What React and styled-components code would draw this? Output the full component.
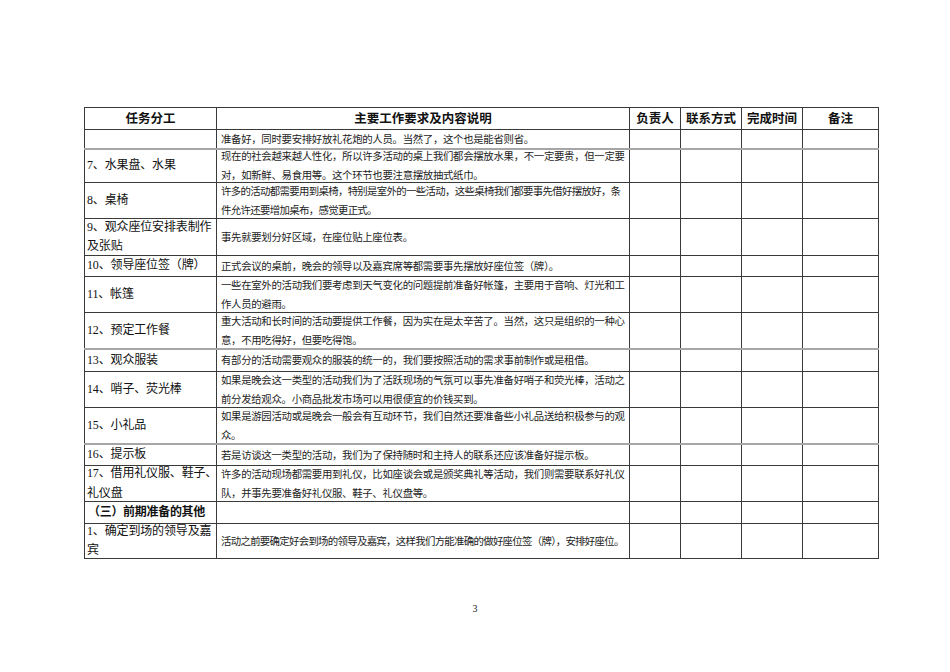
import React from "react"
import styled, { createGlobalStyle } from "styled-components"

const GlobalStyle = createGlobalStyle`
  html, body {
    margin: 0;
    padding: 0;
    background: #ffffff;
  }
  body {
    font-family: "Liberation Serif", "Noto Sans CJK SC", serif;
    color: #111;
  }
`

const Page = styled.div`
  width: 950px;
  height: 672px;
  padding-top: 107px;
  box-sizing: border-box;
`

const Table = styled.table`
  margin-left: 84px;
  width: 794px;
  border-collapse: collapse;
  table-layout: fixed;
`

const HeadCell = styled.th`
  height: 21px;
  padding: 0;
  border: 1px solid #3a3a3a;
  font-family: "Liberation Sans", "Noto Sans CJK SC", sans-serif;
  font-size: 12.5px;
  font-weight: 700;
  line-height: 20px;
  text-align: center;
  vertical-align: middle;
  color: #111;
  overflow: hidden;
`

const Row = styled.tr`
  & > td {
    height: ${props => props.$h - (props.$split ? 2 : 1)}px;
    border-top: ${props =>
      props.$split ? "2px solid #a6a6a6" : "1px solid #3a3a3a"};
  }
`

const TaskCell = styled.td`
  padding: 0 0 0 ${props => (props.$bold ? 3 : 2)}px;
  border: 1px solid #3a3a3a;
  font-family: ${props =>
    props.$bold
      ? `"Liberation Sans", "Noto Sans CJK SC", sans-serif`
      : `"Liberation Serif", "Noto Sans CJK SC", serif`};
  font-size: 12px;
  font-weight: ${props => (props.$bold ? 700 : 400)};
  letter-spacing: ${props => (props.$bold ? "-0.3px" : "-0.15px")};
  vertical-align: middle;
  white-space: nowrap;
  overflow: hidden;
  color: #111;
`

const DescCell = styled.td`
  padding: 0 0 0 4px;
  border: 1px solid #3a3a3a;
  font-size: 10.4px;
  vertical-align: middle;
  white-space: nowrap;
  overflow: hidden;
  color: #1c1c1c;
  letter-spacing: ${props => props.$spacing}px;
`

const EmptyCell = styled.td`
  padding: 0;
  border: 1px solid #3a3a3a;
`

/* negative margin so the line pitch does not push the row taller */
const Text = styled.div`
  margin: -5px 0;
`

const Line = styled.div`
  height: ${props => props.$lh}px;
  line-height: ${props => props.$lh}px;
`

const PageNumber = styled.div`
  margin-top: 44px;
  text-align: center;
  font-family: "Liberation Serif", serif;
  font-size: 10px;
  color: #222;
`

const rows = [
  { task: [""], desc: ["准备好，同时要安排好放礼花炮的人员。当然了，这个也是能省则省。"], h: 19 },
  {
    task: ["7、水果盘、水果"],
    desc: [
      "现在的社会越来越人性化，所以许多活动的桌上我们都会摆放水果，不一定要贵，但一定要",
      "对，如新鲜、易食用等。这个环节也要注意摆放抽式纸巾。",
    ],
    h: 34,
    split: true,
  },
  {
    task: ["8、桌椅"],
    desc: [
      "许多的活动都需要用到桌椅，特别是室外的一些活动，这些桌椅我们都要事先借好摆放好，条",
      "件允许还要增加桌布，感觉更正式。",
    ],
    h: 36,
    spacing: -0.65,
  },
  {
    task: ["9、观众座位安排表制作", "及张贴"],
    desc: ["事先就要划分好区域，在座位贴上座位表。"],
    h: 37,
  },
  {
    task: ["10、领导座位签（牌）"],
    desc: ["正式会议的桌前，晚会的领导以及嘉宾席等都需要事先摆放好座位签（牌）。"],
    h: 21,
  },
  {
    task: ["11、帐篷"],
    desc: [
      "一些在室外的活动我们要考虑到天气变化的问题提前准备好帐篷，主要用于音响、灯光和工",
      "作人员的避雨。",
    ],
    h: 36,
  },
  {
    task: ["12、预定工作餐"],
    desc: [
      "重大活动和长时间的活动要提供工作餐，因为实在是太辛苦了。当然，这只是组织的一种心",
      "意，不用吃得好，但要吃得饱。",
    ],
    h: 36,
  },
  {
    task: ["13、观众服装"],
    desc: ["有部分的活动需要观众的服装的统一的，我们要按照活动的需求事前制作或是租借。"],
    h: 23,
    split: true,
  },
  {
    task: ["14、哨子、荧光棒"],
    desc: [
      "如果是晚会这一类型的活动我们为了活跃现场的气氛可以事先准备好哨子和荧光棒，活动之",
      "前分发给观众。小商品批发市场可以用很便宜的价钱买到。",
    ],
    h: 36,
  },
  {
    task: ["15、小礼品"],
    desc: [
      "如果是游园活动或是晚会一般会有互动环节，我们自然还要准备些小礼品送给积极参与的观",
      "众。",
    ],
    h: 36,
  },
  {
    task: ["16、提示板"],
    desc: ["若是访谈这一类型的活动，我们为了保持随时和主持人的联系还应该准备好提示板。"],
    h: 22,
    split: true,
  },
  {
    task: ["17、借用礼仪服、鞋子、", "礼仪盘"],
    desc: [
      "许多的活动现场都需要用到礼仪，比如座谈会或是颁奖典礼等活动，我们则需要联系好礼仪",
      "队，并事先要准备好礼仪服、鞋子、礼仪盘等。",
    ],
    h: 36,
  },
  { task: ["（三）前期准备的其他"], desc: [], h: 22, bold: true },
  {
    task: ["1、确定到场的领导及嘉", "宾"],
    desc: ["活动之前要确定好会到场的领导及嘉宾，这样我们方能准确的做好座位签（牌），安排好座位。"],
    h: 35,
    spacing: -0.68,
  },
]

const widths = [132, 413, 51, 61, 61, 76]
const headers = ["任务分工", "主要工作要求及内容说明", "负责人", "联系方式", "完成时间", "备注"]

export default function App() {
  return (
    <Page>
      <GlobalStyle />
      <Table>
        <colgroup>
          {widths.map((w, i) => (
            <col key={i} style={{ width: w }} />
          ))}
        </colgroup>
        <thead>
          <tr>
            {headers.map(h => (
              <HeadCell key={h}>{h}</HeadCell>
            ))}
          </tr>
        </thead>
        <tbody>
          {rows.map((r, i) => (
            <Row key={i} $h={r.h} $split={r.split}>
              <TaskCell $bold={r.bold}>
                <Text>
                  {r.task.map((t, j) => (
                    <Line key={j} $lh={19.5}>
                      {t}
                    </Line>
                  ))}
                </Text>
              </TaskCell>
              <DescCell $spacing={r.spacing ?? -0.3}>
                <Text>
                  {r.desc.map((d, j) => (
                    <Line key={j} $lh={19}>
                      {d}
                    </Line>
                  ))}
                </Text>
              </DescCell>
              <EmptyCell />
              <EmptyCell />
              <EmptyCell />
              <EmptyCell />
            </Row>
          ))}
        </tbody>
      </Table>
      <PageNumber>3</PageNumber>
    </Page>
  )
}
